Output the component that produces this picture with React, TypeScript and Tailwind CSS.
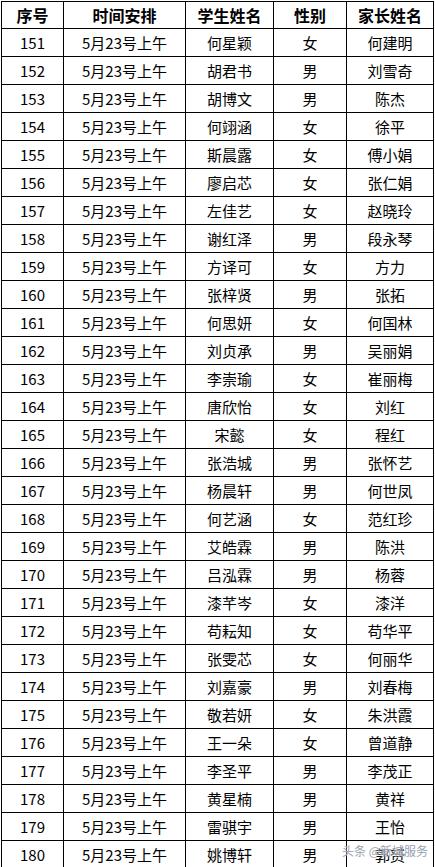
import React from 'react';

// 学生家长名单表 (151-180)
const ROWS: [number, string, string, string][] = [
  [151, '何星颖', '女', '何建明'],
  [152, '胡君书', '男', '刘雪奇'],
  [153, '胡博文', '男', '陈杰'],
  [154, '何翊涵', '女', '徐平'],
  [155, '斯晨露', '女', '傅小娟'],
  [156, '廖启芯', '女', '张仁娟'],
  [157, '左佳艺', '女', '赵晓玲'],
  [158, '谢红泽', '男', '段永琴'],
  [159, '方译可', '女', '方力'],
  [160, '张梓贤', '男', '张拓'],
  [161, '何思妍', '女', '何国林'],
  [162, '刘贞承', '男', '吴丽娟'],
  [163, '李崇瑜', '女', '崔丽梅'],
  [164, '唐欣怡', '女', '刘红'],
  [165, '宋懿', '女', '程红'],
  [166, '张浩城', '男', '张怀艺'],
  [167, '杨晨轩', '男', '何世凤'],
  [168, '何艺涵', '女', '范红珍'],
  [169, '艾皓霖', '男', '陈洪'],
  [170, '吕泓霖', '男', '杨蓉'],
  [171, '漆芊岑', '女', '漆洋'],
  [172, '苟耘知', '女', '苟华平'],
  [173, '张雯芯', '女', '何丽华'],
  [174, '刘嘉豪', '男', '刘春梅'],
  [175, '敬若妍', '女', '朱洪霞'],
  [176, '王一朵', '女', '曾道静'],
  [177, '李圣平', '男', '李茂正'],
  [178, '黄星楠', '男', '黄祥'],
  [179, '雷骐宇', '男', '王怡'],
  [180, '姚博轩', '男', '郭赟'],
];

const COLS = ['w-[62px]', 'w-[122px]', 'w-[88px]', 'w-[73px]', 'w-[87px]'];
const HEADERS = ['序号', '时间安排', '学生姓名', '性别', '家长姓名'];

function Cell({ width, children, bold }: { width: string; children: React.ReactNode; bold?: boolean }) {
  return (
    <div
      className={`${width} shrink-0 h-full flex items-center justify-center border-r border-black ${
        bold ? 'font-bold text-[16px]' : 'text-[15px]'
      }`}
    >
      {children}
    </div>
  );
}

export default function App() {
  return (
    <div
      className="relative w-[435px] h-[867px] overflow-hidden bg-white text-black"
      style={{ fontFamily: '"Noto Sans CJK SC", "Noto Sans", sans-serif' }}
    >
      <div className="ml-px mt-px w-[433px] border-l border-t border-black">
        {/* Header */}
        <div className="flex h-[27px] border-b border-black">
          {HEADERS.map((h, i) => (
            <Cell key={h} width={COLS[i]} bold>
              {h}
            </Cell>
          ))}
        </div>

        {/* Rows */}
        {ROWS.map(([no, student, sex, parent]) => (
          <div key={no} className="flex h-[28px] border-b border-black leading-none">
            <Cell width={COLS[0]}>{no}</Cell>
            <Cell width={COLS[1]}>5月23号上午</Cell>
            <Cell width={COLS[2]}>{student}</Cell>
            <Cell width={COLS[3]}>{sex}</Cell>
            <Cell width={COLS[4]}>{parent}</Cell>
          </div>
        ))}
      </div>

      {/* watermark */}
      <div className="absolute left-[342px] top-[845px] text-[12px] leading-none text-gray-400 whitespace-nowrap [text-shadow:0_0_2px_white]">
        头条 @新城服务
      </div>
    </div>
  );
}
